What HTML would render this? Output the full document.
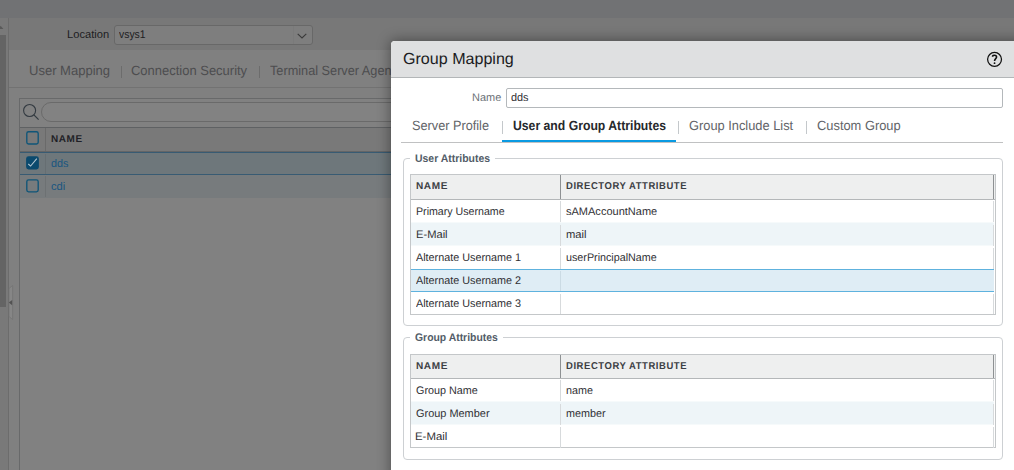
<!DOCTYPE html>
<html>
<head>
<meta charset="utf-8">
<title>Group Mapping</title>
<style>
html,body{margin:0;padding:0;}
body{width:1014px;height:470px;overflow:hidden;position:relative;background:#808080;font-family:"Liberation Sans",sans-serif;font-size:12px;color:#222;}
.a{position:absolute;box-sizing:border-box;}
.t{position:absolute;white-space:nowrap;line-height:1;transform-origin:0 50%;text-rendering:geometricPrecision;}
/* ---------- dimmed background page ---------- */
#topbar{left:0;top:0;width:1014px;height:18px;background:#717274;}
#locbar{left:9px;top:18px;width:1005px;height:32px;background:#787878;}
#leftcol{left:0;top:18px;width:8px;height:452px;background:#797979;}
#leftthumb{left:0;top:35px;width:6px;height:272px;background:#646464;}
#leftline{left:8px;top:18px;width:1px;height:452px;background:#6c6c6c;}
#locsel{left:114px;top:25px;width:199px;height:20px;border:1px solid #686868;border-radius:3px;background:#7e7e7e;}
#tabline{left:9px;top:87px;width:382px;height:1px;background:#727272;}
#panel{left:19px;top:97.5px;width:380px;height:380px;border:1px solid #68696a;background:#818181;}
#sinput{left:41px;top:102px;width:360px;height:20px;border:1px solid #6a6a6a;border-radius:10px;background:#828282;}
#ghead{left:20px;top:127px;width:372px;height:25px;background:#797979;border-top:1px solid #5f6163;border-bottom:1px solid #636567;}
#grow1{left:20px;top:152px;width:372px;height:23px;background:#6e777b;border-top:1px solid #385b73;border-bottom:1px solid #385b73;}
#grow2{left:20px;top:175px;width:372px;height:23px;background:#777b7d;}
.gsep{left:45px;width:1px;background:#6a6a6a;}
/* ---------- dialog ---------- */
#shadow{left:391px;top:41px;width:640px;height:440px;border-radius:4px 0 0 0;box-shadow:0 0 13px 1px rgba(0,0,0,0.38);}
#dlg{left:391px;top:41px;width:640px;height:440px;background:#fff;border-radius:4px 0 0 0;overflow:hidden;}
#dhead{left:0;top:0;width:640px;height:36.5px;background:#dfe0e1;border-bottom:1px solid #b3b6b8;}
#nameinp{left:506px;top:88px;width:496.5px;height:20px;border:1px solid #b4b8bb;border-radius:2px;background:#fff;}
.tsep{width:1px;height:13px;top:121px;background:#c4c8cb;}
#tabbot{left:401px;top:142px;width:602px;height:1px;background:#c0c1c2;}
#tabact{left:502px;top:140px;width:174px;height:2px;background:#0a9ae2;}
.fs{border:1px solid #cdd0d3;border-radius:4px;}
.lg{background:#fff;height:3px;}
.tbl{border:1px solid #c4c7c9;background:#fff;}
.th{background:#eeefef;border-bottom:1px solid #b4b7b9;}
.alt{background:#eef5f8;}
.sel{background:#dfedf5;border-top:1px solid #5eb2de;border-bottom:1px solid #5eb2de;}
.vsep{width:1px;background:#d7dadc;}
.hsep{width:1px;background:#8e9193;}
</style>
</head>
<body>
<!-- background page (dimmed by modal mask) -->
<div class="a" id="topbar"></div>
<div class="a" id="locbar"></div>
<div class="a" id="leftcol"></div>
<div class="a" id="leftthumb"></div>
<div class="a" id="leftline"></div>
<div class="a" id="locsel"></div>
<div class="a" style="left:293px;top:26px;width:1px;height:18px;background:#7a7a7a"></div>
<svg class="a" style="left:295.5px;top:32px" width="12" height="8" viewBox="0 0 12 8"><path d="M1.7 1.8 L6 6 L10.3 1.8" fill="none" stroke="#3a3a3a" stroke-width="1.1"/></svg>
<div class="a" style="left:121px;top:65.5px;width:1px;height:12px;background:#6c6c6c"></div>
<div class="a" style="left:259px;top:65.5px;width:1px;height:12px;background:#6c6c6c"></div>
<div class="a" id="tabline"></div>
<div class="a" id="panel"></div>
<div class="a" id="sinput"></div>
<svg class="a" style="left:22px;top:102px" width="18" height="19" viewBox="0 0 18 19"><circle cx="7.6" cy="8.5" r="6" fill="none" stroke="#333a41" stroke-width="1.1"/><path d="M11.9 12.8 L16.6 17.6" stroke="#333a41" stroke-width="1.2"/></svg>
<div class="a" id="ghead"></div>
<div class="a" id="grow1"></div>
<div class="a" id="grow2"></div>
<div class="a gsep" style="top:128px;height:23px;"></div>
<div class="a gsep" style="top:154px;height:20px;background:#666e72"></div>
<div class="a gsep" style="top:176px;height:21px;background:#6d7173"></div>
<svg class="a" style="left:24px;top:128px" width="18" height="70" viewBox="24 128 18 70">
<rect x="26.8" y="131.7" width="11.4" height="12.3" rx="1.8" fill="none" stroke="#0f5578" stroke-width="1.35"/>
<rect x="26.8" y="156.9" width="11.4" height="11.9" rx="1.8" fill="#0b4a6e" stroke="#0b4a6e" stroke-width="1.35"/>
<path d="M28.3 164 L30.6 166.1 L36.8 158.6" fill="none" stroke="#b4c6d1" stroke-width="1.05"/>
<rect x="26.8" y="179.9" width="11.4" height="12" rx="1.8" fill="none" stroke="#0f5578" stroke-width="1.35"/>
</svg>
<svg class="a" style="left:0;top:20px" width="8" height="12" viewBox="0 0 8 12"><path d="M-2.5 9 L0.6 5.8 L3.4 9 Z" fill="#595959"/></svg>
<svg class="a" style="left:8px;top:284px" width="8" height="38" viewBox="0 0 8 38"><path d="M1 4.5 L4.6 1.5 L4.6 35.5 L1 32.5 Z" fill="#868686" stroke="#737373" stroke-width="0.7"/><path d="M4.2 16 L0.8 18.6 L4.2 21.2 Z" fill="#525252"/></svg>
<span class="t" style="left:67.01px;top:30px;font-size:11.3px;color:#1d1d22;transform:scaleX(0.9854);">Location</span>
<span class="t" style="left:119.00px;top:30px;font-size:11.3px;color:#1d1d22;transform:scaleX(0.9193);">vsys1</span>
<span class="t" style="left:29.43px;top:64px;font-size:13.4px;color:#4d4d4f;transform:scaleX(0.9718);">User Mapping</span>
<span class="t" style="left:131.17px;top:64px;font-size:13.4px;color:#4d4d4f;transform:scaleX(0.9689);">Connection Security</span>
<span class="t" style="left:269.96px;top:64px;font-size:13.4px;color:#4d4d4f;transform:scaleX(0.9495);">Terminal Server Agents</span>
<span class="t" style="left:50.65px;top:135px;font-size:10px;color:#1f1f26;transform:scaleX(0.9950);font-weight:700;letter-spacing:0.6px;">NAME</span>
<span class="t" style="left:50.91px;top:159px;font-size:11px;color:#1a5680;transform:scaleX(0.9824);">dds</span>
<span class="t" style="left:50.89px;top:182px;font-size:11px;color:#1a5680;transform:scaleX(1.0154);">cdi</span>

<!-- modal dialog -->
<div class="a" id="shadow"></div>
<div class="a" id="dlg"><div class="a" id="dhead"></div></div>
<svg class="a" style="left:986px;top:51px" width="18" height="18" viewBox="0 0 18 18"><g transform="translate(0.55,0.35)"><circle cx="8" cy="8" r="6.95" fill="none" stroke="#111" stroke-width="1.25"/><path d="M6 5.3 C6 3.3 10 3.3 10 5.6 C10 7.3 8 7.2 8 9.6" fill="none" stroke="#111" stroke-width="1.6"/><circle cx="8" cy="11.8" r="0.9" fill="#111"/></g></svg>
<div class="a" id="nameinp"></div>
<div class="a tsep" style="left:502px"></div>
<div class="a tsep" style="left:678px"></div>
<div class="a tsep" style="left:806px"></div>
<div class="a" id="tabbot"></div>
<div class="a" id="tabact"></div>

<!-- User Attributes -->
<div class="a fs" style="left:403px;top:158px;width:600px;height:167.5px;"></div>
<div class="a lg" style="left:410px;top:157px;width:85px;"></div>
<div class="a tbl" style="left:410px;top:174px;width:586px;height:141px;"></div>
<div class="a th" style="left:411px;top:175px;width:584px;height:24.5px;"></div>
<div class="a alt" style="left:411px;top:222px;width:583px;height:23px;transform:translateY(0.5px)"></div>
<div class="a sel" style="left:411px;top:269px;width:583px;height:23px;"></div>
<div class="a hsep" style="left:560px;top:175px;height:24px;"></div>
<div class="a hsep" style="left:993px;top:175px;height:24px;"></div>
<div class="a vsep" style="left:560px;top:201px;height:21px;"></div>
<div class="a vsep" style="left:560px;top:224.5px;height:21px;"></div>
<div class="a vsep" style="left:560px;top:247.5px;height:21px;"></div>
<div class="a vsep" style="left:560px;top:271px;height:20px;background:#cbdbe4"></div>
<div class="a vsep" style="left:560px;top:294px;height:20px;"></div>
<div class="a vsep" style="left:993px;top:201px;height:21px;"></div>
<div class="a vsep" style="left:993px;top:224.5px;height:21px;"></div>
<div class="a vsep" style="left:993px;top:247.5px;height:21px;"></div>
<div class="a vsep" style="left:993px;top:294px;height:20px;"></div>

<!-- Group Attributes -->
<div class="a fs" style="left:403px;top:337px;width:600px;height:122.5px;"></div>
<div class="a lg" style="left:410px;top:336px;width:93px;"></div>
<div class="a tbl" style="left:410px;top:354px;width:586px;height:94px;"></div>
<div class="a th" style="left:411px;top:355px;width:584px;height:24px;"></div>
<div class="a alt" style="left:411px;top:401px;width:583px;height:23px;transform:translateY(0.5px)"></div>
<div class="a hsep" style="left:560px;top:355px;height:23px;"></div>
<div class="a hsep" style="left:993px;top:355px;height:23px;"></div>
<div class="a vsep" style="left:560px;top:380px;height:21px;"></div>
<div class="a vsep" style="left:560px;top:403.5px;height:21px;"></div>
<div class="a vsep" style="left:560px;top:426.5px;height:21px;"></div>
<div class="a vsep" style="left:993px;top:380px;height:21px;"></div>
<div class="a vsep" style="left:993px;top:403.5px;height:21px;"></div>
<div class="a vsep" style="left:993px;top:426.5px;height:21px;"></div>
<span class="t" style="left:402.85px;top:52px;font-size:16px;color:#1b1b22;transform:scaleX(1.0046);">Group Mapping</span>
<span class="t" style="left:472.10px;top:93px;font-size:11px;color:#6b7177;transform:scaleX(0.9964);">Name</span>
<span class="t" style="left:510.61px;top:93px;font-size:11px;color:#303034;transform:scaleX(0.9882);">dds</span>
<span class="t" style="left:411.69px;top:119px;font-size:13.4px;color:#626468;transform:scaleX(0.9492);">Server Profile</span>
<span class="t" style="left:512.52px;top:119px;font-size:13.4px;color:#26282c;transform:scaleX(0.9125);font-weight:700;">User and Group Attributes</span>
<span class="t" style="left:688.58px;top:119px;font-size:13.4px;color:#626468;transform:scaleX(0.9587);">Group Include List</span>
<span class="t" style="left:816.58px;top:119px;font-size:13.4px;color:#626468;transform:scaleX(0.9609);">Custom Group</span>
<span class="t" style="left:414.59px;top:154px;font-size:11px;color:#525c67;transform:scaleX(0.9500);font-weight:700;">User Attributes</span>
<span class="t" style="left:415.13px;top:333px;font-size:11px;color:#525c67;transform:scaleX(0.9452);font-weight:700;">Group Attributes</span>
<span class="t" style="left:415.85px;top:182px;font-size:10px;color:#3c3e43;transform:scaleX(1.0050);font-weight:700;letter-spacing:0.6px;">NAME</span>
<span class="t" style="left:565.99px;top:182px;font-size:10px;color:#3c3e43;transform:scaleX(0.9465);font-weight:700;letter-spacing:0.6px;">DIRECTORY ATTRIBUTE</span>
<span class="t" style="left:416.03px;top:207px;font-size:11px;color:#303034;transform:scaleX(0.9662);">Primary Username</span>
<span class="t" style="left:566.05px;top:207px;font-size:11px;color:#303034;transform:scaleX(1.0011);">sAMAccountName</span>
<span class="t" style="left:415.99px;top:230px;font-size:11px;color:#303034;transform:scaleX(1.0136);">E-Mail</span>
<span class="t" style="left:565.74px;top:230px;font-size:11px;color:#303034;transform:scaleX(1.0187);">mail</span>
<span class="t" style="left:416.40px;top:253px;font-size:11px;color:#303034;transform:scaleX(0.9822);">Alternate Username 1</span>
<span class="t" style="left:565.77px;top:253px;font-size:11px;color:#303034;transform:scaleX(0.9766);">userPrincipalName</span>
<span class="t" style="left:416.40px;top:276px;font-size:11px;color:#303034;transform:scaleX(0.9822);">Alternate Username 2</span>
<span class="t" style="left:416.40px;top:299px;font-size:11px;color:#303034;transform:scaleX(0.9822);">Alternate Username 3</span>
<span class="t" style="left:415.85px;top:362px;font-size:10px;color:#3c3e43;transform:scaleX(1.0050);font-weight:700;letter-spacing:0.6px;">NAME</span>
<span class="t" style="left:565.99px;top:362px;font-size:10px;color:#3c3e43;transform:scaleX(0.9465);font-weight:700;letter-spacing:0.6px;">DIRECTORY ATTRIBUTE</span>
<span class="t" style="left:415.91px;top:386px;font-size:11px;color:#303034;transform:scaleX(0.9806);">Group Name</span>
<span class="t" style="left:565.77px;top:386px;font-size:11px;color:#303034;transform:scaleX(0.9790);">name</span>
<span class="t" style="left:415.90px;top:409px;font-size:11px;color:#303034;transform:scaleX(0.9939);">Group Member</span>
<span class="t" style="left:565.77px;top:409px;font-size:11px;color:#303034;transform:scaleX(0.9797);">member</span>
<span class="t" style="left:415.36px;top:432px;font-size:11px;color:#303034;transform:scaleX(1.0373);">E-Mail</span>
</body>
</html>
